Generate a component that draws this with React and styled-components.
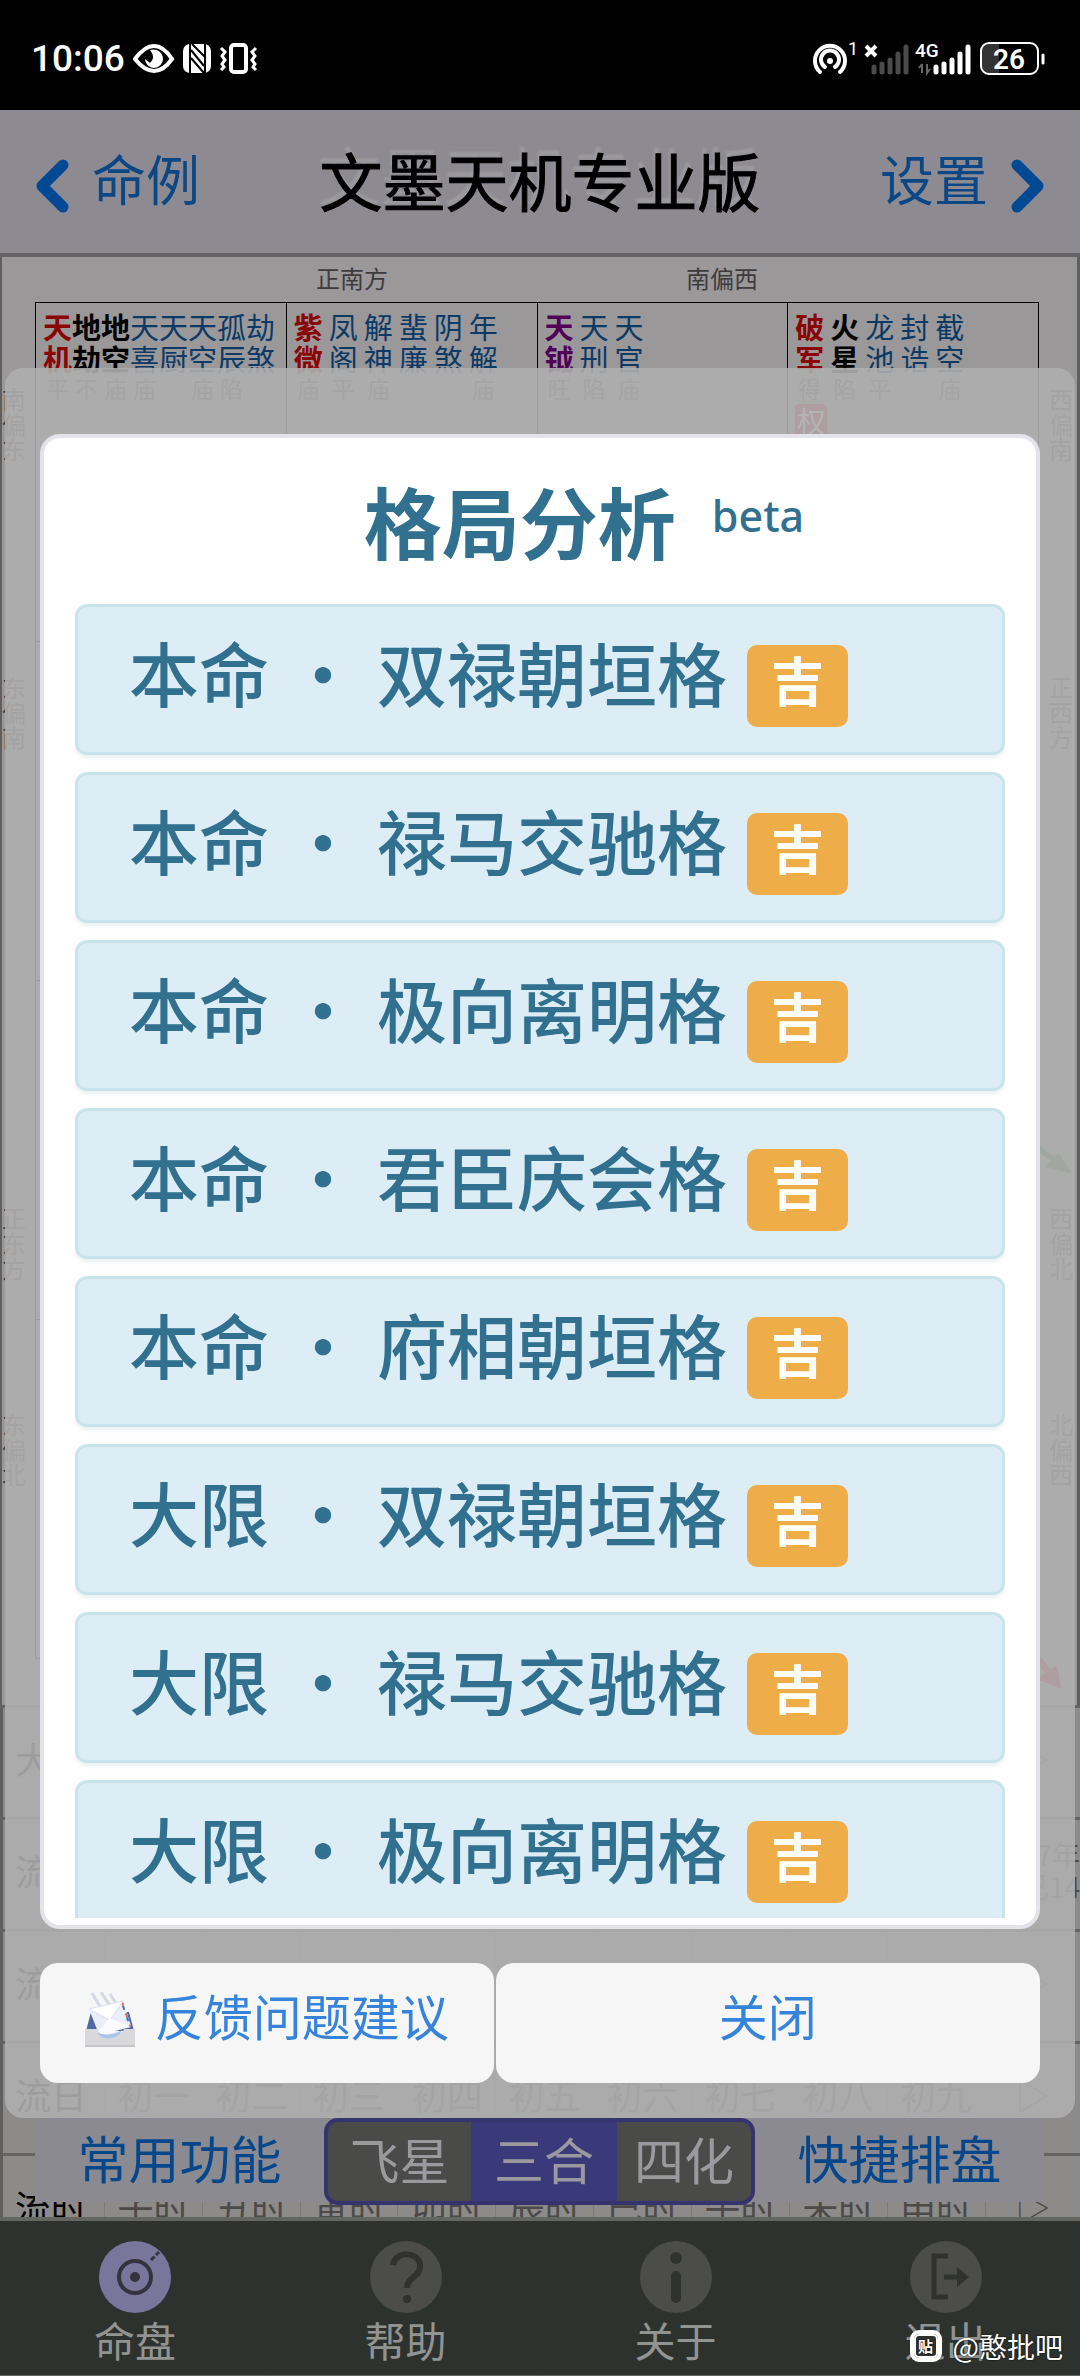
import styled, { createGlobalStyle } from "styled-components";

const GlobalStyle = createGlobalStyle`
  * {
    box-sizing: border-box;
  }

  body {
    margin: 0;
    background: #000;
    font-family: "Noto Sans", "Noto Sans CJK SC", sans-serif;
  }

  button {
    padding: 0;
    border: 0;
    background: none;
    font-family: inherit;
  }
`;

const cjk = `"Noto Sans CJK SC", "Noto Sans", sans-serif`;

const Page = styled.div`
  position: relative;
  display: flex;
  flex-direction: column;
  height: 100vh;
  overflow: hidden;
  font-family: ${cjk};
`;

/* status bar */

const StatusBar = styled.div`
  display: flex;
  align-items: center;
  justify-content: space-between;
  flex: none;
  height: 110px;
  padding: 8px 34px 0 31px;
  background: #000;
  color: #fff;
`;

const StatusGroup = styled.div`
  display: flex;
  align-items: center;
  gap: 8px;
`;

const Clock = styled.span`
  font-family: Roboto, sans-serif;
  font-size: 37px;
  font-weight: 500;
  line-height: 40px;
`;

/* header */

const Header = styled.header`
  display: flex;
  align-items: center;
  justify-content: space-between;
  flex: none;
  height: 147px;
  padding: 0 36px;
  border-bottom: 4px solid #666566;
  background: #8d8b91;
`;

const HeaderButton = styled.button`
  display: flex;
  align-items: center;
  gap: 23px;
  padding-bottom: 8px;
  color: #0c4785;
  font-family: ${cjk};
  font-size: 54px;
  line-height: 72px;

  svg {
    margin-top: 16px;
  }
`;

const AppTitle = styled.h1`
  margin: 0;
  padding-bottom: 5px;
  color: #000;
  font-size: 63px;
  font-weight: 400;
  line-height: 80px;
  -webkit-text-stroke: 1px #000;
  text-shadow: -2px -6px 2px #9b9a9e;
`;

/* chart */

const Content = styled.main`
  position: relative;
  flex: 1;
  min-height: 0;
  overflow: hidden;
  background: #8d8b8a;
`;

const Board = styled.section`
  position: relative;
  display: grid;
  grid-template-columns: 33px 1fr 38px;
  border-left: 2px solid #5f5f60;
  border-right: 3px solid #5f5f60;
  background: #9b989a;
  color: #3d3c3d;
  font-size: 24px;
`;

const Directions = styled.div`
  grid-column: 2;
  display: flex;
  justify-content: space-between;
  height: 45px;
  padding: 0 28%;
  line-height: 42px;
`;

const SideLabels = styled.div`
  grid-row: 2;
  grid-column: ${({ $column }) => $column};
  display: grid;
  grid-template-rows: 288px 531px 206px auto;
  justify-content: ${({ $column }) => ($column === 1 ? "start" : "end")};
  padding: 84px ${({ $column }) => ($column === 1 ? 0 : 4)}px 0 0;
  line-height: 25px;
`;

const SideLabel = styled.span`
  width: 24px;
  word-break: break-all;
`;

const Palaces = styled.div`
  grid-row: 2;
  grid-column: 2;
  display: grid;
  grid-template-columns: repeat(4, 1fr);
  grid-auto-rows: 339px;
  margin-bottom: 46px;
  border-top: 1px solid #000;
  border-left: 1px solid #000;
`;

const Palace = styled.div`
  display: flex;
  align-items: flex-start;
  gap: ${({ $tight }) => ($tight ? 0 : 6)}px;
  padding: 7px;
  border-right: 1px solid #000;
  border-bottom: 1px solid #000;
`;

const PalaceCenter = styled.div`
  grid-row: 2 / 4;
  grid-column: 2 / 4;
  border-right: 1px solid #000;
  border-bottom: 1px solid #000;
`;

const starColors = {
  main: "#8a0505",
  black: "#000",
  purple: "#510057",
  minor: "#0b3a66",
};

const Star = styled.div`
  width: 29px;
  color: ${({ $kind }) => starColors[$kind]};
  font-size: 29px;
  font-weight: ${({ $kind }) => ($kind === "minor" ? 400 : 700)};
  line-height: 32px;
  text-align: center;
`;

const Strength = styled.div`
  height: 28px;
  color: #4b484a;
  font-size: 23px;
  font-weight: 400;
  line-height: 28px;
`;

const Transform = styled.span`
  display: block;
  width: 32px;
  height: 32px;
  margin-top: 2px;
  border-radius: 4px;
  background: #a8123a;
  color: #e5dfe1;
  font-weight: 400;
`;

const Arrows = styled.svg`
  position: absolute;
  right: 0;
  bottom: 0;
`;

const Periods = styled.table`
  width: 100%;
  table-layout: fixed;
  border-collapse: collapse;
  color: #4b4a49;
  font-size: 36px;

  th {
    width: 103px;
    padding: 0 0 10px 12px;
    color: #000;
    font-weight: 400;
    text-align: left;
  }

  td {
    padding: 0 0 10px;
    border-left: 1px solid #7d7b7a;
    text-align: center;
  }

  td:last-child {
    width: 95px;
  }
`;

const PeriodRow = styled.tr`
  height: 112px;
  border-top: 3px solid #666462;
  border-left: 3px solid #5f5f60;
`;

const YearNote = styled.span`
  display: block;
  font-size: 28px;
  line-height: 32px;
  text-align: right;
  white-space: nowrap;
`;

/* toolbar above the tab bar */

const Toolbar = styled.div`
  position: absolute;
  right: 36px;
  bottom: 12px;
  left: 35px;
  display: flex;
  align-items: center;
  justify-content: space-between;
  height: 87px;
  background: linear-gradient(#8b8a90 84px, transparent 84px);
`;

const ToolbarButton = styled.button`
  flex: 1;
  padding-bottom: 10px;
  color: #05478a;
  font-family: ${cjk};
  font-size: 51px;
  line-height: 76px;
  white-space: nowrap;
`;

const Segments = styled.div`
  display: flex;
  flex: none;
  height: 87px;
  border: 4px solid #37336f;
  border-radius: 14px;
  background: #4a4a49;
  overflow: hidden;
`;

const Segment = styled.button`
  width: 146px;
  padding-bottom: 10px;
  background: ${({ $active }) => ($active ? "#3a3a7b" : "#4a4a49")};
  color: #9a9a9e;
  font-family: ${cjk};
  font-size: 50px;
  line-height: 72px;

  &:first-child {
    width: 143px;
  }

  &:last-child {
    width: 134px;
  }
`;

/* tab bar */

const TabBar = styled.nav`
  display: grid;
  grid-template-columns: repeat(4, 1fr);
  flex: none;
  height: 159px;
  border-top: 4px solid #656562;
  border-bottom: 1px solid #656562;
  background: #2e322f;
`;

const Tab = styled.button`
  display: flex;
  flex-direction: column;
  align-items: center;
  padding-top: 18px;
  color: #929492;
  font-family: ${cjk};
  font-size: 41px;
  line-height: 48px;

  & + & {
    border-left: 1px solid #303431;
  }
`;

/* dialog */

const Dialog = styled.div`
  position: absolute;
  top: 368px;
  right: 5px;
  bottom: 258px;
  left: 5px;
  display: flex;
  flex-direction: column;
  gap: 34px;
  padding: 66px 35px 35px;
  border-radius: 18px;
  background: rgba(174, 174, 174, 0.9);
`;

const Panel = styled.section`
  display: flex;
  flex-direction: column;
  flex: 1;
  min-height: 0;
  padding: 0 31px 7px;
  border: 4px solid #e4e3ea;
  border-radius: 20px;
  background: #fff;
`;

const PanelTitle = styled.h2`
  display: flex;
  align-items: flex-start;
  justify-content: center;
  gap: 36px;
  height: 166px;
  flex: none;
  margin: 0;
  padding: 22px 0 0 88px;
  color: #31708f;
  font-size: 78px;
  font-weight: 700;
  line-height: 120px;
`;

const Beta = styled.sup`
  padding-top: 20px;
  font-family: "Noto Sans", sans-serif;
  font-size: 43px;
  font-weight: 500;
  line-height: 72px;
`;

const PatternList = styled.ul`
  display: flex;
  flex-direction: column;
  gap: 17px;
  flex: 1;
  min-height: 0;
  margin: 0;
  padding: 0;
  overflow: hidden;
  list-style: none;
`;

const PatternItem = styled.li`
  display: flex;
  align-items: flex-start;
  flex: none;
  height: 151px;
  padding: 0 51px;
  border: 3px solid #c9e4ed;
  border-radius: 12px;
  background: #dcedf6;
  box-shadow: 0 3px 4px rgba(49, 112, 143, 0.1);
  color: #31708f;
  font-size: 70px;
  font-weight: 500;
  line-height: 130px;
`;

const Dot = styled.span`
  padding: 0 19px;
`;

const Badge = styled.span`
  height: 82px;
  margin: 38px 0 0 20px;
  padding: 0 24px;
  border-radius: 10px;
  background: #eead49;
  color: #fff;
  font-size: 53px;
  font-weight: 700;
  line-height: 68px;
`;

const Actions = styled.div`
  display: flex;
  gap: 2px;
  flex: none;
  height: 120px;
`;

const ActionButton = styled.button`
  display: flex;
  align-items: center;
  justify-content: center;
  gap: 20px;
  flex: ${({ $grow }) => $grow} 1 0;
  padding-bottom: 16px;
  border-radius: 18px;
  background: #f6f6f6;
  color: #3583da;
  font-family: ${cjk};
  font-size: 49px;
  line-height: 72px;

  svg {
    margin-top: 10px;
  }
`;

const Watermark = styled.div`
  position: absolute;
  right: 17px;
  bottom: 10px;
  display: flex;
  align-items: center;
  gap: 11px;
  color: #fff;
  font-size: 28px;
  line-height: 40px;
  text-shadow: 0 0 2px #000;
`;

const WatermarkLogo = styled.span`
  display: flex;
  align-items: center;
  justify-content: center;
  width: 32px;
  height: 32px;
  border: 4px solid #fff;
  border-radius: 9px;
  background: #2e322f;
  box-shadow: inset 0 0 0 2px #fff;
  font-size: 15px;
  font-weight: 700;
  line-height: 20px;
`;

const palaces = [
  {
    tight: true,
    stars: [
      ["天机", "main", "平"],
      ["地劫", "black", "不"],
      ["地空", "black", "庙"],
      ["天喜", "minor", "庙"],
      ["天厨", "minor", ""],
      ["天空", "minor", "庙"],
      ["孤辰", "minor", "陷"],
      ["劫煞", "minor", ""],
    ],
  },
  {
    stars: [
      ["紫微", "main", "庙"],
      ["凤阁", "minor", "平"],
      ["解神", "minor", "庙"],
      ["蜚廉", "minor", ""],
      ["阴煞", "minor", ""],
      ["年解", "minor", "庙"],
    ],
  },
  {
    stars: [
      ["天钺", "purple", "旺"],
      ["天刑", "minor", "陷"],
      ["天官", "minor", "庙"],
    ],
  },
  {
    stars: [
      ["破军", "main", "得", "权"],
      ["火星", "black", "陷"],
      ["龙池", "minor", "平"],
      ["封诰", "minor", ""],
      ["截空", "minor", "庙"],
    ],
  },
];

const leftLabels = ["南偏东", "东偏南", "正东方", "东偏北"];
const rightLabels = ["西偏南", "正西方", "西偏北", "北偏西"];

const days = ["初一", "初二", "初三", "初四", "初五", "初六", "初七", "初八", "初九"];
const hours = ["子时", "丑时", "寅时", "卯时", "辰时", "巳时", "午时", "未时", "申时"];
const blank = Array(9).fill("");

const periods = [
  { label: "大限", cells: blank, end: "▷" },
  { label: "流年", cells: blank, end: "note" },
  { label: "流月", cells: blank, end: "▷" },
  { label: "流日", cells: days, end: "▷" },
  { label: "流时", cells: hours, end: "▷" },
];

const patterns = [
  ["本命", "双禄朝垣格"],
  ["本命", "禄马交驰格"],
  ["本命", "极向离明格"],
  ["本命", "君臣庆会格"],
  ["本命", "府相朝垣格"],
  ["大限", "双禄朝垣格"],
  ["大限", "禄马交驰格"],
  ["大限", "极向离明格"],
];

const tabs = [
  { label: "命盘", icon: "target" },
  { label: "帮助", icon: "help" },
  { label: "关于", icon: "info" },
  { label: "退出", icon: "exit" },
];

function StatusIcons() {
  return (
    <svg width="126" height="34" viewBox="0 0 126 34" fill="none" stroke="#fff">
      <path d="M2 17C10 6 16 4 21 4s11 2 18 13c-7 10-13 12-18 12S10 27 2 17Z" strokeWidth="4" />
      <path d="M17 8c5-2 13 1 13 9a9 9 0 0 1-18 0l5 4c3-3 5-7 0-13Z" fill="#fff" stroke="none" />
      <rect x="50" y="2" width="28" height="29" rx="7" fill="#fff" stroke="none" />
      <path d="M57 2v29M72 2v29" stroke="#000" strokeWidth="2" />
      <path d="m58 8 13 16M58 16l13 15M59 2l13 13" stroke="#000" strokeWidth="2" />
      <rect x="98" y="3" width="15" height="27" rx="3" strokeWidth="4" />
      <path d="m88 6 4 4-3 4 3 4-3 4 2 3-3 3M123 6l-4 4 3 4-3 4 3 4-2 3 3 3" strokeWidth="3" />
    </svg>
  );
}

function HotspotIcon() {
  return (
    <svg width="36" height="34" viewBox="0 0 36 34" fill="none" stroke="#fff" strokeLinecap="round">
      <path d="M8 30a15 15 0 1 1 20 0" strokeWidth="4" />
      <path d="M13 25a9 9 0 1 1 10 0" strokeWidth="4" />
      <circle cx="18" cy="19" r="3" fill="#fff" stroke="none" />
    </svg>
  );
}

function SignalBars({ color, children }) {
  return (
    <svg width="54" height="34" viewBox="0 0 54 34" fill="none" overflow="visible">
      <path
        d="M18 25v5M26 22v8M34 18v12M42 12v18M50 5v25"
        stroke={color}
        strokeWidth="5"
        strokeLinecap="round"
      />
      {children}
    </svg>
  );
}

function Chevron({ flip }) {
  return (
    <svg width="33" height="54" viewBox="0 0 33 54" fill="none">
      <path
        d={flip ? "M6 6l21 21L6 48" : "M27 6 6 27l21 21"}
        stroke="#004a94"
        strokeWidth="11"
        strokeLinecap="round"
        strokeLinejoin="round"
      />
    </svg>
  );
}

function TabIcon({ name }) {
  const active = name === "target";
  return (
    <svg width="74" height="76" viewBox="0 0 74 76" fill="none">
      <circle cx="37" cy="38" r="36" fill={active ? "#7a759b" : "#4c4c4b"} />
      {name === "target" && (
        <g stroke="#34323f">
          <circle cx="37" cy="38" r="16" strokeWidth="4" />
          <circle cx="37" cy="38" r="5" fill="#34323f" stroke="none" />
          <path d="m53 21 8-8" strokeWidth="3" strokeDasharray="5 2" />
        </g>
      )}
      {name === "help" && (
        <g stroke="#30322f" strokeWidth="6">
          <path d="M24 26c2-15 28-14 27 2 0 10-13 10-13 21" />
          <circle cx="38" cy="60" r="4" fill="#30322f" stroke="none" />
        </g>
      )}
      {name === "info" && (
        <g stroke="#30322f" strokeWidth="10" strokeLinecap="round">
          <path d="M37 37v22" />
          <circle cx="37" cy="19" r="6" fill="#30322f" stroke="none" />
        </g>
      )}
      {name === "exit" && (
        <g stroke="#30322f" strokeWidth="5">
          <path d="M39 17H25v41h14M35 38h18" />
          <path d="m48 28 12 10-12 10Z" fill="#30322f" stroke="none" />
        </g>
      )}
    </svg>
  );
}

function EnvelopeIcon() {
  return (
    <svg width="50" height="56" viewBox="0 0 50 56">
      <path d="M6 20h38l5 19H1Z" fill="#5268a4" />
      <path d="m7 1 9 15M16 0l9 14M25 2l7 11" stroke="#d3d8e6" strokeWidth="3" />
      <path d="m4 17 34-8 8 25-33 6Z" fill="#e9eef9" />
      <path d="M37 10l8 24" stroke="#d9695c" strokeWidth="2" strokeDasharray="4 8" />
      <path d="M38 14l7 20" stroke="#3d6fc4" strokeWidth="2" strokeDasharray="4 8" />
      <path d="m4 17 34-8-13 19Z" fill="#fff" stroke="#dde2f0" />
      <path d="m12 41 13-15 21 9-28 7Z" fill="#fafbff" />
      <path d="M0 37h12c3 10 24 10 27 0h11v18H0Z" fill="#d9d8da" />
      <path d="M13 41c8 3 18 1 24-3-2 9-20 12-24 3Z" fill="#a9c4ea" />
      <path d="M0 54h50" stroke="#c6c5c7" strokeWidth="2" />
    </svg>
  );
}

function PatternDialog() {
  return (
    <Dialog role="dialog" aria-label="格局分析">
      <Panel>
        <PanelTitle>
          格局分析<Beta>beta</Beta>
        </PanelTitle>
        <PatternList>
          {patterns.map(([scope, name]) => (
            <PatternItem key={scope + name}>
              {scope}
              <Dot>・</Dot>
              {name}
              <Badge>吉</Badge>
            </PatternItem>
          ))}
        </PatternList>
      </Panel>
      <Actions>
        <ActionButton $grow={5}>
          <EnvelopeIcon />
          反馈问题建议
        </ActionButton>
        <ActionButton $grow={6}>关闭</ActionButton>
      </Actions>
    </Dialog>
  );
}

function Chart() {
  return (
    <Board>
      <Directions>
        <span>正南方</span>
        <span>南偏西</span>
      </Directions>
      <SideLabels $column={1}>
        {leftLabels.map((label) => (
          <SideLabel key={label}>{label}</SideLabel>
        ))}
      </SideLabels>
      <Palaces>
        {palaces.map(({ tight, stars }) => (
          <Palace key={stars[0][0]} $tight={tight}>
            {stars.map(([name, kind, strength, transform]) => (
              <Star key={name} $kind={kind}>
                {name}
                <Strength>{strength}</Strength>
                {transform && <Transform>{transform}</Transform>}
              </Star>
            ))}
          </Palace>
        ))}
        <PalaceCenter />
        {Array.from({ length: 8 }, (_, i) => (
          <Palace key={i} />
        ))}
      </Palaces>
      <SideLabels $column={3}>
        {rightLabels.map((label) => (
          <SideLabel key={label}>{label}</SideLabel>
        ))}
      </SideLabels>
      <Arrows width="60" height="580" viewBox="0 0 60 580">
        <path d="M10 14l28 22" stroke="#1f6b2c" strokeWidth="5" />
        <path d="M42 28l12 20-26-6Z" fill="#1f6b2c" />
        <path d="M18 530l16 20" stroke="#a8123a" strokeWidth="7" />
        <path d="M40 540l4 24-24-10Z" fill="#a8123a" />
      </Arrows>
    </Board>
  );
}

export default function App() {
  return (
    <Page>
      <GlobalStyle />
      <StatusBar>
        <StatusGroup>
          <Clock>10:06</Clock>
          <StatusIcons />
        </StatusGroup>
        <StatusGroup>
          <HotspotIcon />
          <SignalBars color="#4b4b4b">
            <text x="-8" y="13" fill="#fff" fontSize="18" fontFamily="Roboto">
              1
            </text>
            <path d="m10 4 10 10M20 4l-10 10" stroke="#fff" strokeWidth="4" />
          </SignalBars>
          <SignalBars color="#fff">
            <text x="-3" y="15" fill="#fff" fontSize="19" fontWeight="500" fontFamily="Roboto">
              4G
            </text>
            <path d="M4 22v9M4 22l-3 4M9 22v9l3-4" stroke="#666" strokeWidth="2" />
          </SignalBars>
          <svg width="66" height="34" viewBox="0 0 66 34" fill="none">
            <path d="M9 2h10v30H9a7 7 0 0 1-7-7V9a7 7 0 0 1 7-7Z" fill="#333" />
            <rect x="1" y="1" width="57" height="31" rx="8" stroke="#fff" strokeWidth="2" />
            <path d="M63 13v8" stroke="#fff" strokeWidth="3" strokeLinecap="round" />
            <text
              x="29"
              y="27"
              fill="#fff"
              fontSize="28"
              fontWeight="600"
              fontFamily="Roboto"
              textAnchor="middle"
            >
              26
            </text>
          </svg>
        </StatusGroup>
      </StatusBar>
      <Header>
        <HeaderButton>
          <Chevron />
          命例
        </HeaderButton>
        <AppTitle>文墨天机专业版</AppTitle>
        <HeaderButton>
          设置
          <Chevron flip />
        </HeaderButton>
      </Header>
      <Content>
        <Chart />
        <Periods>
          <tbody>
            {periods.map(({ label, cells, end }) => (
              <PeriodRow key={label}>
                <th scope="row">{label}</th>
                {cells.map((cell, i) => (
                  <td key={i}>{cell}</td>
                ))}
                <td>
                  {end === "note" ? (
                    <>
                      <YearNote>7年</YearNote>
                      <YearNote>己14</YearNote>
                    </>
                  ) : (
                    end
                  )}
                </td>
              </PeriodRow>
            ))}
          </tbody>
        </Periods>
        <Toolbar>
          <ToolbarButton>常用功能</ToolbarButton>
          <Segments>
            <Segment>飞星</Segment>
            <Segment $active>三合</Segment>
            <Segment>四化</Segment>
          </Segments>
          <ToolbarButton>快捷排盘</ToolbarButton>
        </Toolbar>
      </Content>
      <TabBar>
        {tabs.map(({ label, icon }) => (
          <Tab key={label}>
            <TabIcon name={icon} />
            {label}
          </Tab>
        ))}
      </TabBar>
      <PatternDialog />
      <Watermark>
        <WatermarkLogo>贴</WatermarkLogo>
        @憨批吧
      </Watermark>
    </Page>
  );
}
